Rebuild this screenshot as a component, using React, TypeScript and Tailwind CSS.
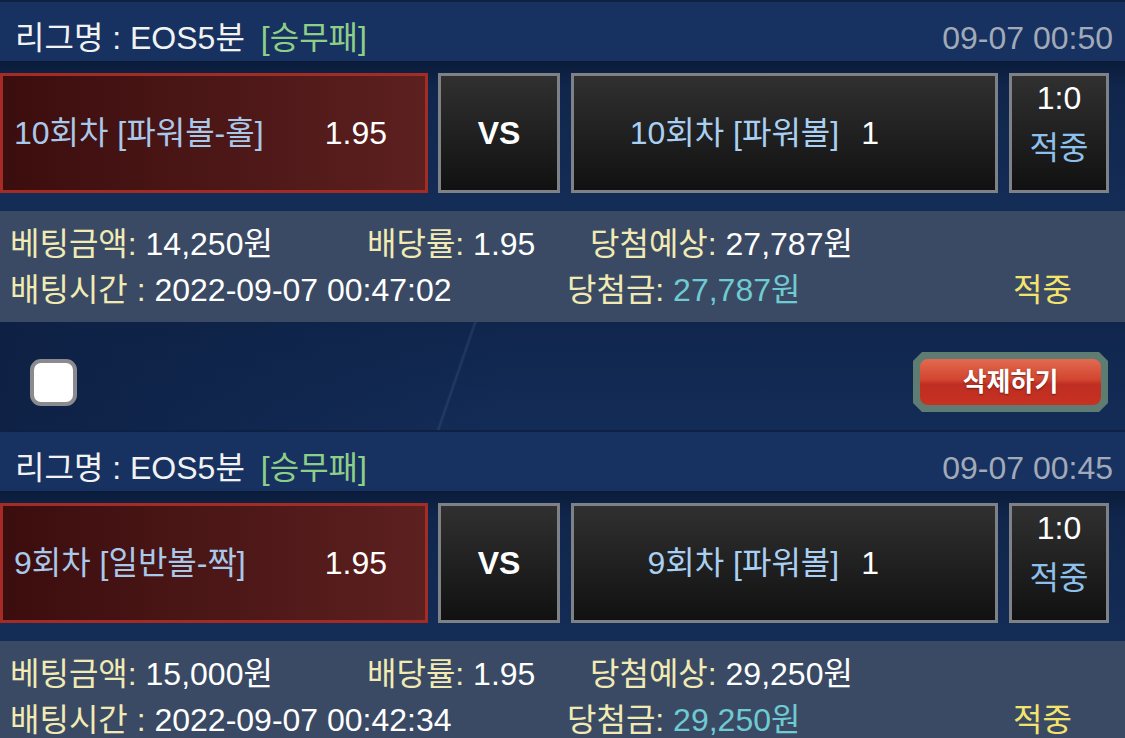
import React from 'react';

interface Bet {
  league: string;
  kind: string;
  time: string;
  pick: string;
  odds: string;
  away: string;
  awayScore: string;
  score: string;
  result: string;
  amount: string;
  rate: string;
  expected: string;
  betTime: string;
  won: string;
}

const BETS: Bet[] = [
  {
    league: 'EOS5분',
    kind: '[승무패]',
    time: '09-07 00:50',
    pick: '10회차 [파워볼-홀]',
    odds: '1.95',
    away: '10회차 [파워볼]',
    awayScore: '1',
    score: '1:0',
    result: '적중',
    amount: '14,250원',
    rate: '1.95',
    expected: '27,787원',
    betTime: '2022-09-07 00:47:02',
    won: '27,787원',
  },
  {
    league: 'EOS5분',
    kind: '[승무패]',
    time: '09-07 00:45',
    pick: '9회차 [일반볼-짝]',
    odds: '1.95',
    away: '9회차 [파워볼]',
    awayScore: '1',
    score: '1:0',
    result: '적중',
    amount: '15,000원',
    rate: '1.95',
    expected: '29,250원',
    betTime: '2022-09-07 00:42:34',
    won: '29,250원',
  },
];

function BetCard({ bet }: { bet: Bet }) {
  return (
    <div>
      {/* league header */}
      <div className="flex h-[61px] items-end justify-between border-t-2 border-[#0e2043] bg-[#173261] pb-[5px] pl-[15px] pr-[12px]">
        <div className="text-[#f2f2f2]">
          리그명 : {bet.league}
          <span className="ml-[16px] text-[#8ecf88]">{bet.kind}</span>
        </div>
        <div className="text-[#a2aab8]">{bet.time}</div>
      </div>

      {/* match row */}
      <div className="flex h-[150px] pt-[12px] bg-[linear-gradient(180deg,#0b1c3a_0%,#10264c_18%,#142d57_100%)]">
        <div className="flex h-[120px] w-[428px] items-center justify-between border-[3px] border-[#a52b25] bg-[linear-gradient(90deg,#3c0d0e_0%,#5c201f_100%)] pl-[11px] pr-[38px]">
          <span className="text-[#a9c9ea]">{bet.pick}</span>
          <span className="text-white">{bet.odds}</span>
        </div>
        <div className="ml-[10px] flex h-[120px] w-[122px] items-center justify-center border-[3px] border-[#7e8186] bg-[linear-gradient(180deg,#303030_0%,#111111_100%)] font-bold text-white">
          VS
        </div>
        <div className="ml-[11px] flex h-[120px] w-[427px] items-center justify-end gap-[22px] border-[3px] border-[#7e8186] bg-[linear-gradient(180deg,#303030_0%,#111111_100%)] pr-[116px]">
          <span className="text-[#a9d0f2]">{bet.away}</span>
          <span className="text-white">{bet.awayScore}</span>
        </div>
        <div className="ml-[11px] flex h-[120px] w-[100px] flex-col items-center gap-[6px] border-[3px] border-[#7e8186] bg-[linear-gradient(180deg,#303030_0%,#111111_100%)] leading-[44px]">
          <span className="text-white">{bet.score}</span>
          <span className="text-[#8ec0ee]">{bet.result}</span>
        </div>
      </div>

      {/* bet info */}
      <div className="h-[111px] bg-[#3a4a64] pl-[10px] pt-[10px]">
        <div className="flex h-[46px] items-center">
          <div className="w-[357px]">
            <span className="text-[#f1ebb3]">베팅금액:</span>
            <span className="text-white"> {bet.amount}</span>
          </div>
          <div className="w-[223px]">
            <span className="text-[#f1ebb3]">배당률:</span>
            <span className="text-white"> {bet.rate}</span>
          </div>
          <div>
            <span className="text-[#f1ebb3]">당첨예상:</span>
            <span className="text-white"> {bet.expected}</span>
          </div>
        </div>
        <div className="flex h-[46px] items-center">
          <div className="w-[557px]">
            <span className="text-[#f1ebb3]">배팅시간 :</span>
            <span className="text-white"> {bet.betTime}</span>
          </div>
          <div className="w-[446px]">
            <span className="text-[#f1ebb3]">당첨금:</span>
            <span className="text-[#6fcad2]"> {bet.won}</span>
          </div>
          <span className="text-[#f4e46c]">{bet.result}</span>
        </div>
      </div>

      {/* actions */}
      <div className="flex h-[108px] items-center justify-between pl-[30px] pr-[17px] pt-[12px] bg-[linear-gradient(109deg,transparent_40.7%,rgba(120,160,215,0.16)_40.9%,transparent_41.1%),linear-gradient(100deg,#0e2145_0%,#11295200_45%),linear-gradient(180deg,#10264d_0%,#132c57_100%)]">
        <div className="h-[47px] w-[47px] rounded-[11px] border-[4px] border-[#8b8b8f] bg-white" />
        <button className="flex h-[60px] w-[195px] items-stretch bg-[#5f7c73] p-[7px] [clip-path:polygon(9px_0,calc(100%-9px)_0,100%_9px,100%_calc(100%-9px),calc(100%-9px)_100%,9px_100%,0_calc(100%-9px),0_9px)]">
          <span className="flex w-full items-center justify-center rounded-[8px] bg-[linear-gradient(180deg,#e26a50_0%,#d2452f_45%,#c02d22_55%,#c63322_100%)] text-[26px] font-bold text-white [text-shadow:0_1px_2px_rgba(0,0,0,0.45)]">
            삭제하기
          </span>
        </button>
      </div>
    </div>
  );
}

export default function App() {
  return (
    <div className="h-[738px] w-[1125px] overflow-hidden bg-[#10264d] font-['Liberation_Sans','Noto_Sans_CJK_KR',sans-serif] text-[32px] leading-[36px]">
      {BETS.map((bet, i) => (
        <BetCard key={i} bet={bet} />
      ))}
    </div>
  );
}
